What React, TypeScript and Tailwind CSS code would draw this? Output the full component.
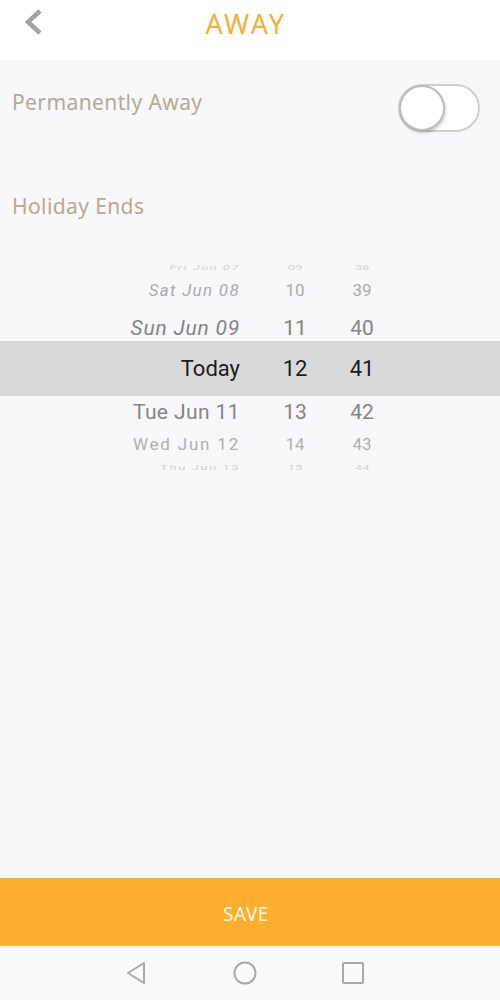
import React from "react";

const label = { fontFamily: '"Noto Sans", Lato, sans-serif' };
const roboto = { fontFamily: "Roboto, sans-serif" };

type Row = {
  date: string;
  hour: string;
  min: string;
  cls: string;
  text: string;
  dateCls: string;
};

const rows: Row[] = [
  { date: "Fri Jun 07", hour: "09", min: "38", cls: "h-[18px] items-center overflow-hidden", text: "text-[13px] text-[#d2d2d2] scale-y-50", dateCls: "italic tracking-[1.5px]" },
  { date: "Sat Jun 08", hour: "10", min: "39", cls: "h-[28px] items-center", text: "text-[17px] text-[#ababab]", dateCls: "italic tracking-[1.3px]" },
  { date: "Sun Jun 09", hour: "11", min: "40", cls: "h-[36px] pt-[11px] items-center", text: "text-[21px] text-[#858585]", dateCls: "italic tracking-[0.8px]" },
  { date: "Today", hour: "12", min: "41", cls: "h-[55px] items-center bg-[#d9d9d9]", text: "text-[22px] text-[#1c1c1c]", dateCls: "" },
  { date: "Tue Jun 11", hour: "13", min: "42", cls: "h-[30px] pt-[4px] items-center", text: "text-[21px] text-[#858585]", dateCls: "tracking-[0.4px]" },
  { date: "Wed Jun 12", hour: "14", min: "43", cls: "h-[30px] pt-[8px] items-center", text: "text-[17px] text-[#b0b0b0]", dateCls: "tracking-[1.8px]" },
  { date: "Thu Jun 13", hour: "15", min: "44", cls: "h-[20px] pt-[4px] items-center overflow-hidden", text: "text-[13px] text-[#d2d2d2] scale-y-50", dateCls: "tracking-[1.5px]" },
];

export default function App() {
  return (
    <div className="flex h-[1000px] w-[500px] flex-col bg-[#f8f7fa]">
      <header className="relative flex h-[60px] items-center justify-center bg-white">
        <svg className="absolute left-[22px] top-[8px]" width="22" height="28" viewBox="0 0 22 28">
          <path d="M18 3 L6 14 L18 25" fill="none" stroke="#a3a3a3" strokeWidth="4.5" />
        </svg>
        <h1 className="pb-[12px] pr-[8px] text-[27px] tracking-[2.5px] text-[#f2b236]" style={label}>
          AWAY
        </h1>
      </header>

      <main className="flex flex-1 flex-col">
        <div className="flex justify-between pl-[12px] pr-[20px] pt-[24px]">
          <span className="mt-[4px] text-[21px] leading-[28px] tracking-[0.4px] text-[#b3ac91]" style={label}>
            Permanently Away
          </span>
          <div className="relative h-[48px] w-[82px] rounded-full border-2 border-[#cfcfcf] bg-white">
            <div className="absolute -left-[1px] -top-[1px] h-[46px] w-[46px] rounded-full border-2 border-[#bdbdbd] bg-white shadow-[1px_2px_3px_rgba(0,0,0,0.2)]" />
          </div>
        </div>

        <span className="ml-[12px] mt-[60px] text-[21px] leading-[28px] tracking-[0.4px] text-[#b3ac91]" style={label}>
          Holiday Ends
        </span>

        <div className="mt-[39px] flex flex-col" style={roboto}>
          {rows.map((r) => (
            <div key={r.date} className={`flex ${r.cls}`}>
              <div className={`flex w-[240px] justify-end whitespace-nowrap ${r.text} ${r.dateCls}`}>{r.date}</div>
              <div className={`ml-[20px] flex w-[70px] justify-center ${r.text}`}>{r.hour}</div>
              <div className={`flex w-[64px] justify-center ${r.text}`}>{r.min}</div>
            </div>
          ))}
        </div>
      </main>

      <button className="flex h-[68px] items-center justify-center bg-[#fcae2f] pr-[8px] pt-[4px] text-[19px] tracking-[0.5px] text-[#fff7e6]" style={label}>
        SAVE
      </button>

      <nav className="flex h-[54px] items-center justify-center gap-[84px] bg-[#fafafa] pr-[10px]">
        <svg width="24" height="24" viewBox="0 0 24 24">
          <path d="M19 2 L19 22 L3 12 Z" fill="none" stroke="#a9a9a9" strokeWidth="2" strokeLinejoin="round" />
        </svg>
        <svg width="24" height="24" viewBox="0 0 24 24">
          <circle cx="12" cy="12" r="10.5" fill="none" stroke="#a9a9a9" strokeWidth="2" />
        </svg>
        <svg width="24" height="24" viewBox="0 0 24 24">
          <rect x="2" y="2" width="20" height="20" rx="1" fill="none" stroke="#a9a9a9" strokeWidth="2" />
        </svg>
      </nav>
    </div>
  );
}
